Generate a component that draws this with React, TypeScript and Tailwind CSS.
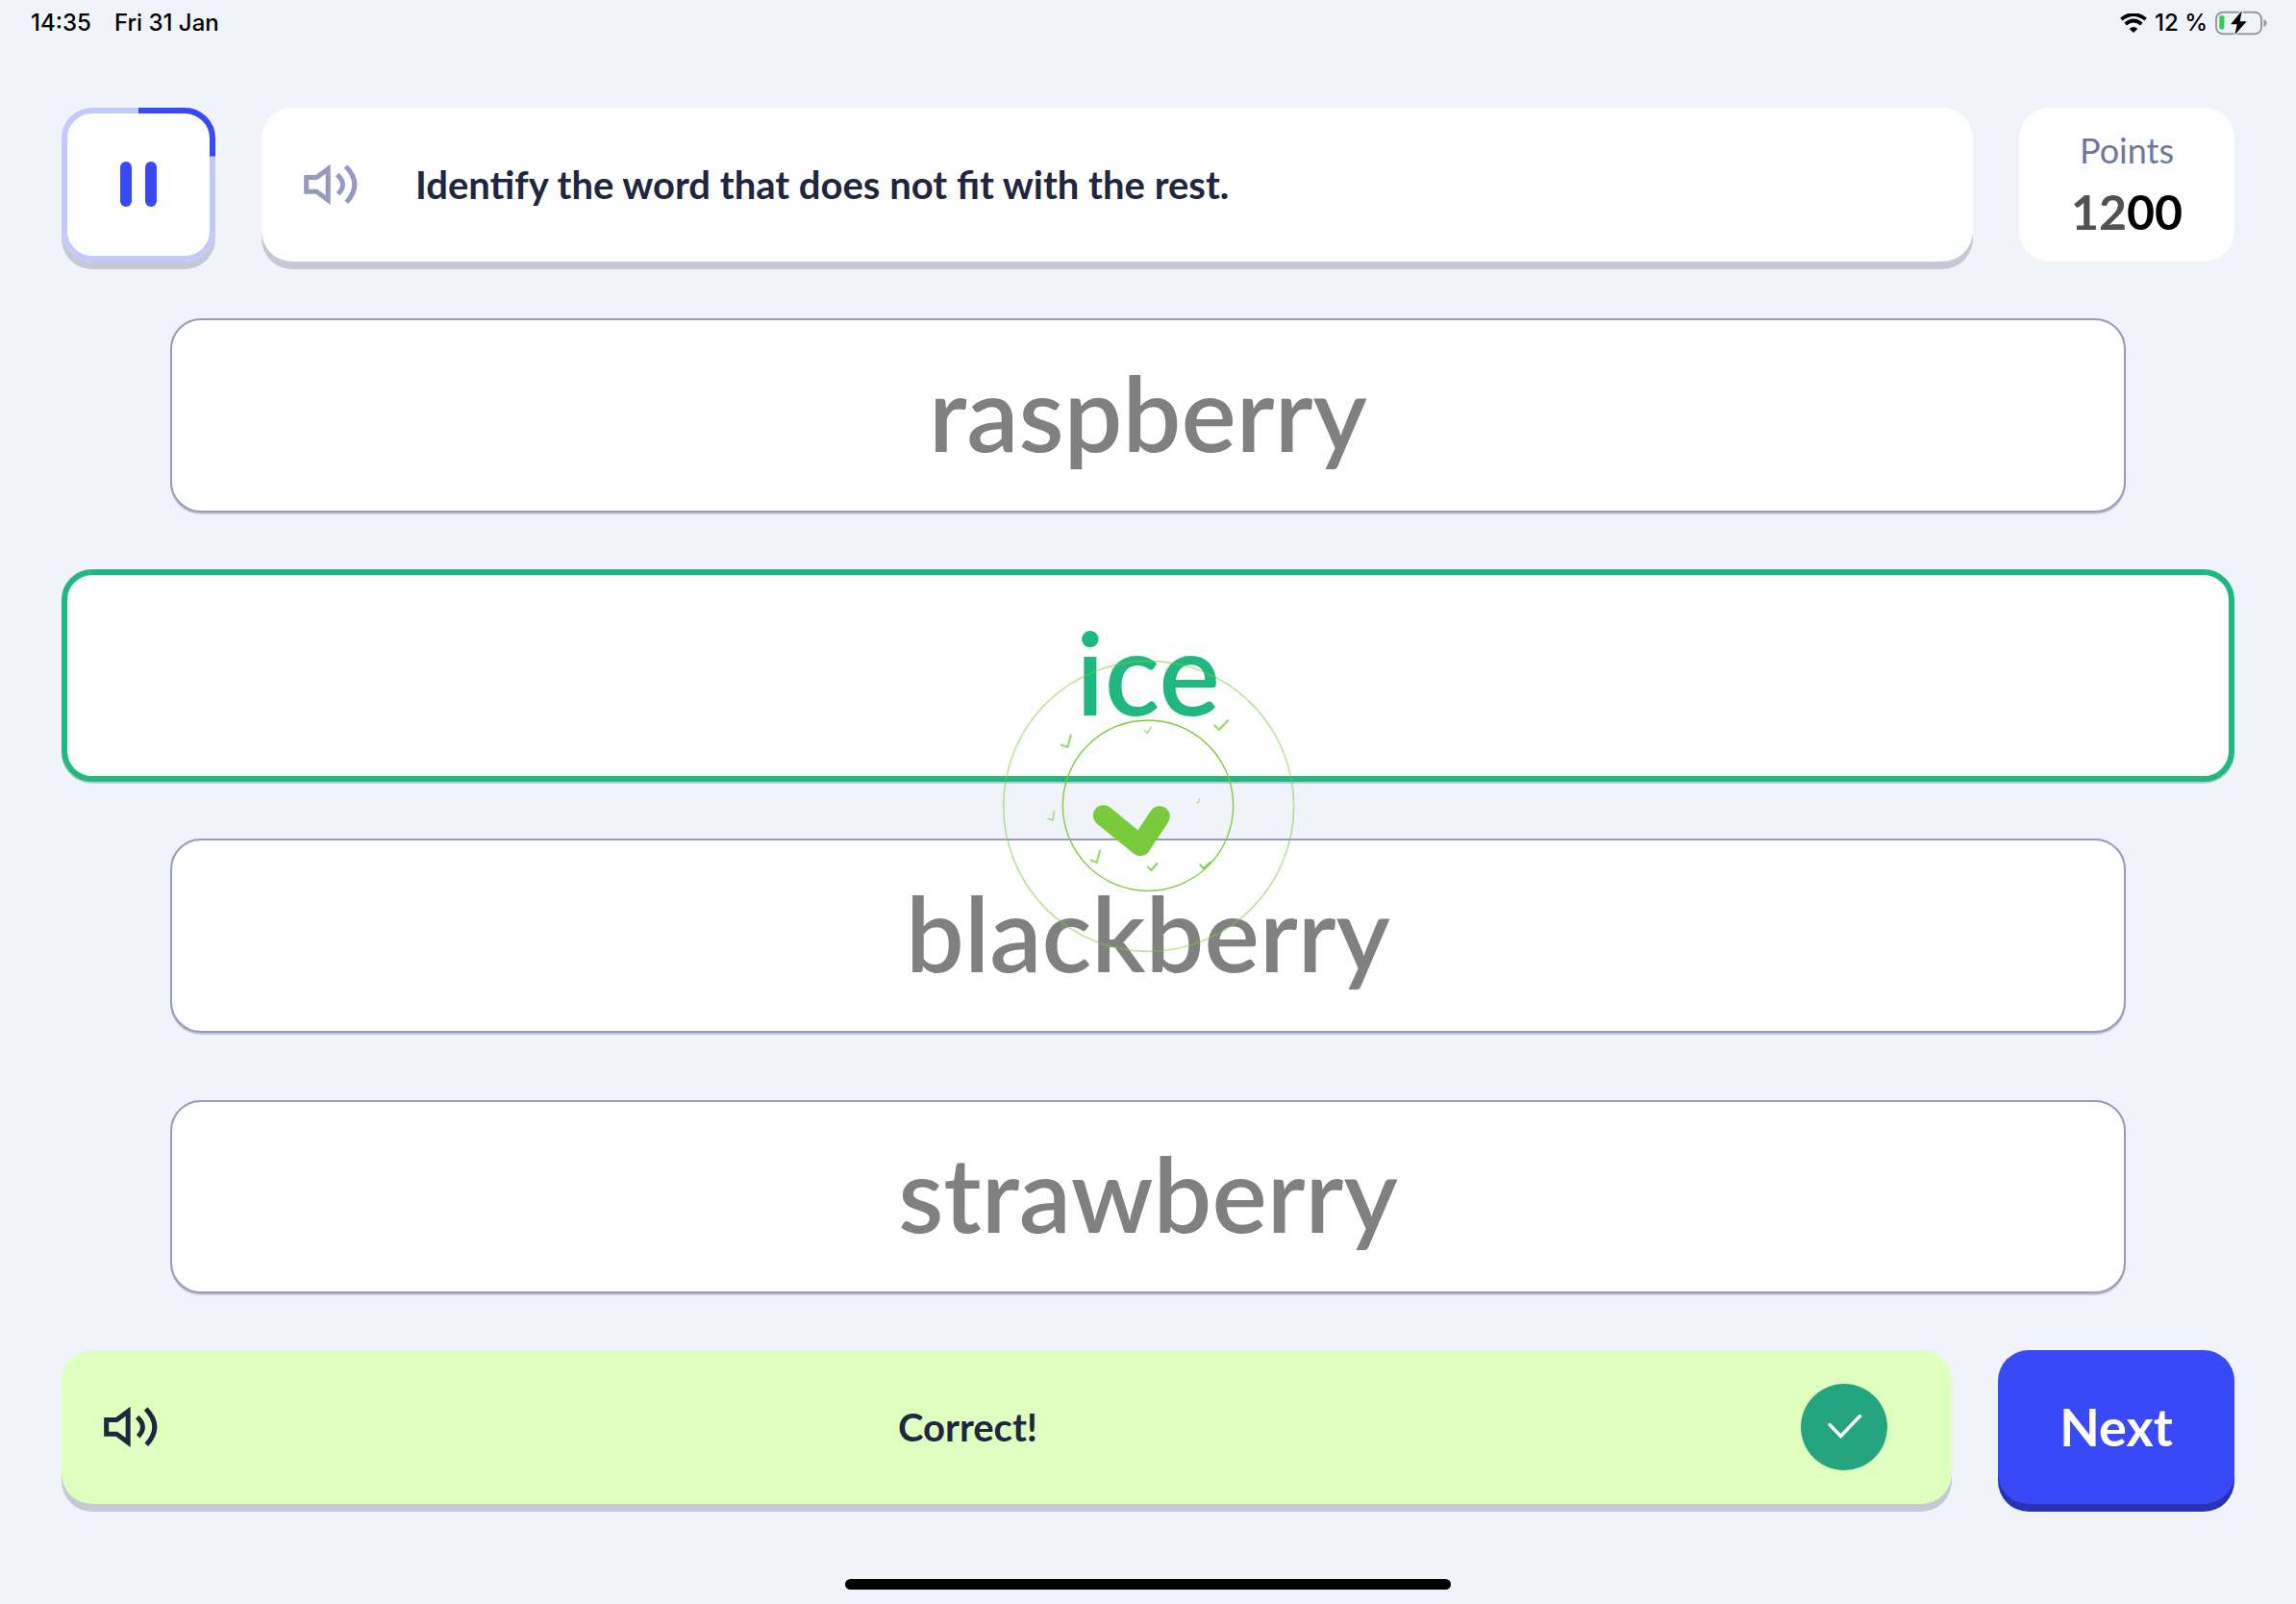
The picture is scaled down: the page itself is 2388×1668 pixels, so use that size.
import React from "react";
import clsx from "clsx";

const options = [
  { word: "raspberry", correct: false },
  { word: "ice", correct: true },
  { word: "blackberry", correct: false },
  { word: "strawberry", correct: false },
];

function SpeakerIcon() {
  return (
    <svg
      className="h-[42px] w-14"
      viewBox="205 282 168 126"
      fill="none"
      stroke="currentColor"
      strokeWidth="15"
      aria-hidden="true"
    >
      <path d="M213 322.5H245L280.500 296V393L245 366.500H213Z" strokeLinejoin="miter" />
      <path d="M309 314Q342 344 312 374" />
      <path d="M336 288Q390 344 338 400" />
    </svg>
  );
}

function WifiIcon() {
  return (
    <svg className="h-5 w-7" viewBox="72 42 84 60" fill="none" stroke="black" aria-hidden="true">
      <path d="M76 60Q114 30 152 60" strokeWidth="11" />
      <path d="M89 75Q114 54 139 75" strokeWidth="11" />
      <path d="M101 90Q114 78 127 90L114 102Z" fill="black" stroke="none" />
    </svg>
  );
}

function BatteryIcon() {
  return (
    <svg className="h-[26px] w-[54px]" viewBox="374 33 162 78" aria-hidden="true">
      <rect x="377" y="38" width="141" height="68" rx="21" fill="none" stroke="#98999e" strokeWidth="6" />
      <path d="M525 60Q535 64 535 72T525 84Z" fill="#98999e" />
      <rect x="387" y="48" width="15" height="44" rx="7" fill="#34c759" />
      <path
        d="M457 34L422 76H442L435 109L472 67H451Z"
        fill="black"
        stroke="#f0f3fa"
        strokeWidth="7"
        paintOrder="stroke"
      />
    </svg>
  );
}

function StatusBar() {
  return (
    <div className="flex h-12 items-center justify-between pl-8 pr-[30px] font-['Inter',sans-serif] text-2xl font-medium text-black">
      <div className="flex gap-6">
        <span>14:35</span>
        <span>Fri 31 Jan</span>
      </div>
      <div className="flex items-center gap-2">
        <WifiIcon />
        <span>12 %</span>
        <BatteryIcon />
      </div>
    </div>
  );
}

function PauseButton() {
  return (
    <button
      type="button"
      aria-label="Pause"
      className="size-40 shrink-0 rounded-[32px] shadow-[0_8px_0_#c6c9d5]"
    >
      <svg className="size-40" viewBox="0 0 160 160" fill="none" aria-hidden="true">
        <rect x="3" y="3" width="154" height="154" rx="29" fill="white" stroke="#c3c8fd" strokeWidth="6" />
        <path d="M80 3H128A29 29 0 0 1 157 32V50.500" stroke="#3a49f8" strokeWidth="6" />
        <rect x="61" y="56" width="12" height="47" rx="6" fill="#3a49f8" />
        <rect x="87" y="56" width="12" height="47" rx="6" fill="#3a49f8" />
      </svg>
    </button>
  );
}

function Header() {
  return (
    <header className="flex gap-12">
      <PauseButton />
      <div className="flex flex-1 items-center gap-[60px] rounded-[32px] bg-white px-11 shadow-[0_8px_0_#c6c9d5]">
        <button type="button" aria-label="Read the question" className="text-[#949bbd]">
          <SpeakerIcon />
        </button>
        <h1 className="text-[40px] font-bold leading-[48px]">
          Identify the word that does not fit with the rest.
        </h1>
      </div>
      <div className="flex w-56 flex-col items-center justify-center rounded-[32px] bg-white pb-2">
        <span className="text-4xl leading-[64px] text-[#6f779f]">Points</span>
        <span className="text-[50px] font-bold leading-[64px] text-black">
          <span className="text-[#525252]">12</span>00
        </span>
      </div>
    </header>
  );
}

function Option({ word, correct }: { word: string; correct: boolean }) {
  return (
    <div className="flex flex-1">
      <button
        type="button"
        className={clsx(
          "flex-1 rounded-[32px] bg-white pb-2 font-semibold shadow-[0_2px_0_#c6c9d5]",
          correct
            ? "border-6 border-[#1fb881] text-[120px] leading-[120px] text-[#1fb881]"
            : "mx-[5%] my-[11px] border-2 border-[#949bbd] text-[108px] leading-[108px] text-[#808080]"
        )}
      >
        {word}
      </button>
    </div>
  );
}

function Footer() {
  return (
    <footer className="flex h-40 gap-12">
      <div className="flex flex-1 items-center rounded-[32px] bg-[#deffbe] pl-11 pr-[67px] shadow-[0_8px_0_#c6c9d5]">
        <button type="button" aria-label="Read the feedback">
          <SpeakerIcon />
        </button>
        <p className="flex-1 pr-6 text-center text-[40px] font-bold leading-[48px]">Correct!</p>
        <svg className="size-[90px]" viewBox="0 0 90 90" fill="none" aria-hidden="true">
          <circle cx="45" cy="45" r="45" fill="#24a580" />
          <path
            d="M30 42.500L41.500 54.500L61.500 33.500"
            stroke="white"
            strokeWidth="3.500"
            strokeLinecap="round"
          />
        </svg>
      </div>
      <button
        type="button"
        className="w-[246px] rounded-[32px] bg-[#3a49f8] text-[54px] font-bold leading-[64px] text-white shadow-[0_8px_0_#2833b3]"
      >
        Next
      </button>
    </footer>
  );
}

// Burst that plays over the options after a correct answer
function CorrectBurst() {
  return (
    <div className="pointer-events-none absolute inset-0 flex items-center justify-center">
      <svg
        className="size-[400px]"
        viewBox="-18 42 1200 1200"
        fill="none"
        stroke="#7acb3c"
        strokeLinecap="round"
        strokeLinejoin="round"
        aria-hidden="true"
      >
        <circle cx="584" cy="655" r="453" strokeWidth="5" opacity="0.5" />
        <circle cx="582" cy="653" r="266" strokeWidth="4" />
        <path d="M443 684L558 778L618 687" strokeWidth="65" />
        <g strokeWidth="7" opacity="0.7">
          <path d="M312 464L331 471L341 434" />
          <path d="M790 403L803 417L831 388" />
          <path d="M405 824L422 831L432 794" />
        </g>
        <g strokeWidth="5" opacity="0.6">
          <path d="M270 694L285 699L289 671" />
          <path d="M571 419L580 427L592 409" />
        </g>
        <g strokeWidth="6" opacity="0.85">
          <path d="M582 845L592 855L610 834" />
          <path d="M745 838L755 849L776 830" />
        </g>
        <path d="M734 643L740 644L742 631" strokeWidth="3" opacity="0.7" />
      </svg>
    </div>
  );
}

export default function App() {
  return (
    <div className="relative flex min-h-screen flex-col bg-[#f0f3fa] font-['Lato',sans-serif] text-[#212640]">
      <StatusBar />
      <main className="flex flex-1 flex-col gap-12 px-16 pt-16">
        <Header />
        <section className="flex flex-1 flex-col gap-12" aria-label="Options">
          {options.map((option) => (
            <Option key={option.word} {...option} />
          ))}
        </section>
        <Footer />
      </main>
      <div className="flex h-[104px] items-end justify-center pb-[15px]">
        <div className="h-[11px] w-[630px] rounded-full bg-black" />
      </div>
      <CorrectBurst />
    </div>
  );
}
